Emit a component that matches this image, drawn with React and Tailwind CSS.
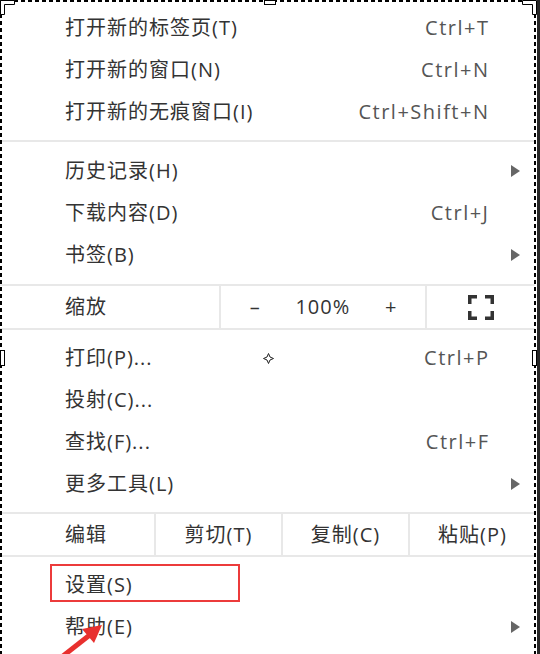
import React from "react";

const FONT = { fontFamily: '"Open Sans", "Noto Sans CJK SC", sans-serif' };

const Tri = () => (
  <svg width="9" height="12" viewBox="0 0 9 12">
    <path d="M0 0 L9 6 L0 12 Z" fill="#666" />
  </svg>
);

const Row = ({ label, shortcut, arrow }) => (
  <div className="flex h-[42px] items-center">
    <div className="flex-1 pl-[65px] tracking-[1px] text-[#333]">{label}</div>
    {shortcut && <div className="mr-[-1.5px] tracking-[1.5px] text-[#555]">{shortcut}</div>}
    <div className="flex w-[47px] justify-end pr-[15px]">{arrow && <Tri />}</div>
  </div>
);

const Sep = () => <div className="h-[2px] bg-[#e8e8e8]" />;
const VSep = () => <div className="w-[2px] self-stretch bg-[#e8e8e8]" />;

export default function App() {
  return (
    <div className="relative h-[654px] w-[540px] overflow-hidden bg-white text-[20px]" style={FONT}>
      <div className="flex w-[535px] flex-col">
        <div className="py-[7px]">
          <Row label="打开新的标签页(T)" shortcut="Ctrl+T" />
          <Row label="打开新的窗口(N)" shortcut="Ctrl+N" />
          <Row label="打开新的无痕窗口(I)" shortcut="Ctrl+Shift+N" />
        </div>
        <Sep />
        <div className="py-[8px]">
          <Row label="历史记录(H)" arrow />
          <Row label="下载内容(D)" shortcut="Ctrl+J" />
          <Row label="书签(B)" arrow />
        </div>
        <Sep />
        <div className="flex h-[42px] items-center">
          <div className="w-[220px] pl-[65px] tracking-[1px] text-[#333]">缩放</div>
          <VSep />
          <div className="flex flex-1 items-center text-[#333]">
            <div className="flex w-[68px] justify-center">–</div>
            <div className="flex w-[68px] justify-center tracking-[1px]">100%</div>
            <div className="flex w-[68px] justify-center">+</div>
          </div>
          <VSep />
          <div className="flex w-[109px] justify-center">
            <svg width="26" height="25" viewBox="0 0 26 25" fill="none" stroke="#333" strokeWidth="3.5">
              <path d="M1.75 9 V1.75 H9" />
              <path d="M17 1.75 H24.25 V9" />
              <path d="M1.75 16 V23.25 H9" />
              <path d="M17 23.25 H24.25 V16" />
            </svg>
          </div>
        </div>
        <Sep />
        <div className="py-[7px]">
          <Row label="打印(P)..." shortcut="Ctrl+P" />
          <Row label="投射(C)..." />
          <Row label="查找(F)..." shortcut="Ctrl+F" />
          <Row label="更多工具(L)" arrow />
        </div>
        <Sep />
        <div className="flex h-[41px] items-center tracking-[1px] text-[#333]">
          <div className="w-[154px] pl-[65px]">编辑</div>
          <VSep />
          <div className="flex w-[125px] justify-center">剪切(T)</div>
          <VSep />
          <div className="flex w-[125px] justify-center">复制(C)</div>
          <VSep />
          <div className="flex flex-1 justify-center">粘贴(P)</div>
        </div>
        <Sep />
        <div className="py-[7px]">
          <Row label="设置(S)" />
          <Row label="帮助(E)" arrow />
        </div>
      </div>

      {/* selection frame overlays */}
      <div className="absolute left-0 top-0 h-full w-[2px] bg-[repeating-linear-gradient(to_bottom,#000_0_4px,transparent_4px_7px)]" />
      <div className="absolute left-0 top-0 h-[2px] w-[536px] bg-[repeating-linear-gradient(to_right,#000_0_4px,transparent_4px_7px)]" />
      <div className="absolute right-[4px] top-0 h-full w-[2px] bg-[repeating-linear-gradient(to_bottom,#000_0_4px,transparent_4px_7px)]" />
      <div className="absolute right-0 top-0 h-full w-[3px] bg-[#262626]" />

      <svg className="absolute left-0 top-0" width="16" height="16" viewBox="0 0 16 16">
        <path d="M0.5 0.5 H14.5 V4.5 H4.5 V14.5 H0.5 Z" fill="#fff" stroke="#000" />
      </svg>
      <svg className="absolute right-[3px] top-0" width="16" height="16" viewBox="0 0 16 16">
        <path d="M15.5 0.5 H1.5 V4.5 H11.5 V14.5 H15.5 Z" fill="#fff" stroke="#000" />
      </svg>
      <div className="absolute left-[264px] top-0 h-[5px] w-[12px] border border-black bg-white" />
      <div className="absolute left-0 top-[350px] h-[16px] w-[5px] border border-black bg-white" />
      <div className="absolute right-[3px] top-[350px] h-[16px] w-[5px] border border-black bg-white" />

      {/* cursor crosshair */}
      <svg className="absolute left-[263px] top-[353px]" width="11" height="11" viewBox="0 0 11 11">
        <path d="M5.5 0.5 L7 4 L10.5 5.5 L7 7 L5.5 10.5 L4 7 L0.5 5.5 L4 4 Z" fill="#fff" stroke="#222" strokeWidth="1" />
      </svg>

      {/* red annotation box */}
      <div className="absolute left-[50px] top-[564px] h-[38px] w-[190px] border-2 border-[#ec3b3b]" />

      {/* red annotation arrow */}
      <svg className="absolute left-[55px] top-[610px]" width="55" height="44" viewBox="0 0 55 44">
        <path d="M8 46 L36 24" stroke="#e8302e" strokeWidth="5" strokeLinecap="butt" />
        <path d="M47 15 L27 19 L39 33 Z" fill="#e8302e" />
      </svg>
    </div>
  );
}
